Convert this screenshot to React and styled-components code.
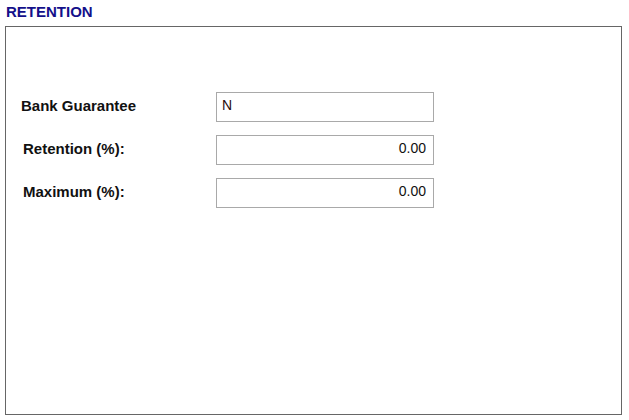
import styled, { createGlobalStyle } from "styled-components"

const Global = createGlobalStyle`
    body {
        margin:0;
        background:#fff;
        font-family:"Liberation Sans", Arial, sans-serif;
    }
`;

const Page = styled.div`
    padding:3px 0 0 5px;
`;

const Title = styled.h2`
    margin:0 0 6px 1px;
    font-size:15px;
    line-height:17px;
    font-weight:bold;
    color:#14108a;
`;

const Panel = styled.div`
    width:615px;
    border:1px solid #666;
    padding-top:65px;
    box-sizing:content-box;
    height:322px;
    display:flex;
    flex-direction:column;
    gap:13px;
`;

const Row = styled.div`
    display:flex;
    align-items:center;
    height:30px;
`;

const Label = styled.label`
    width:${(props)=>props.wide ? "195px" : "193px"};
    padding-left:${(props)=>props.wide ? "15px" : "17px"};
    padding-bottom:3px;
    font-size:15px;
    font-weight:bold;
    color:#111;
`;

const Field = styled.input`
    box-sizing:border-box;
    width:218px;
    height:30px;
    border:1px solid #a9a9a9;
    padding:0 7px 4px 5px;
    font-family:"Liberation Sans", Arial, sans-serif;
    font-size:14px;
    color:${(props)=>props.dark ? "#2a0a0a" : "#111"};
    text-align:${(props)=>props.numeric ? "right" : "left"};
    outline:none;
    background:#fff;
`;

const App = ()=>{
    return(
        <Page>
            <Global/>
            <Title>RETENTION</Title>
            <Panel>
                <Row>
                    <Label wide>Bank Guarantee</Label>
                    <Field dark defaultValue="N" readOnly/>
                </Row>
                <Row>
                    <Label>Retention (%):</Label>
                    <Field numeric defaultValue="0.00" readOnly/>
                </Row>
                <Row>
                    <Label>Maximum (%):</Label>
                    <Field numeric defaultValue="0.00" readOnly/>
                </Row>
            </Panel>
        </Page>
    )
}

export default App
